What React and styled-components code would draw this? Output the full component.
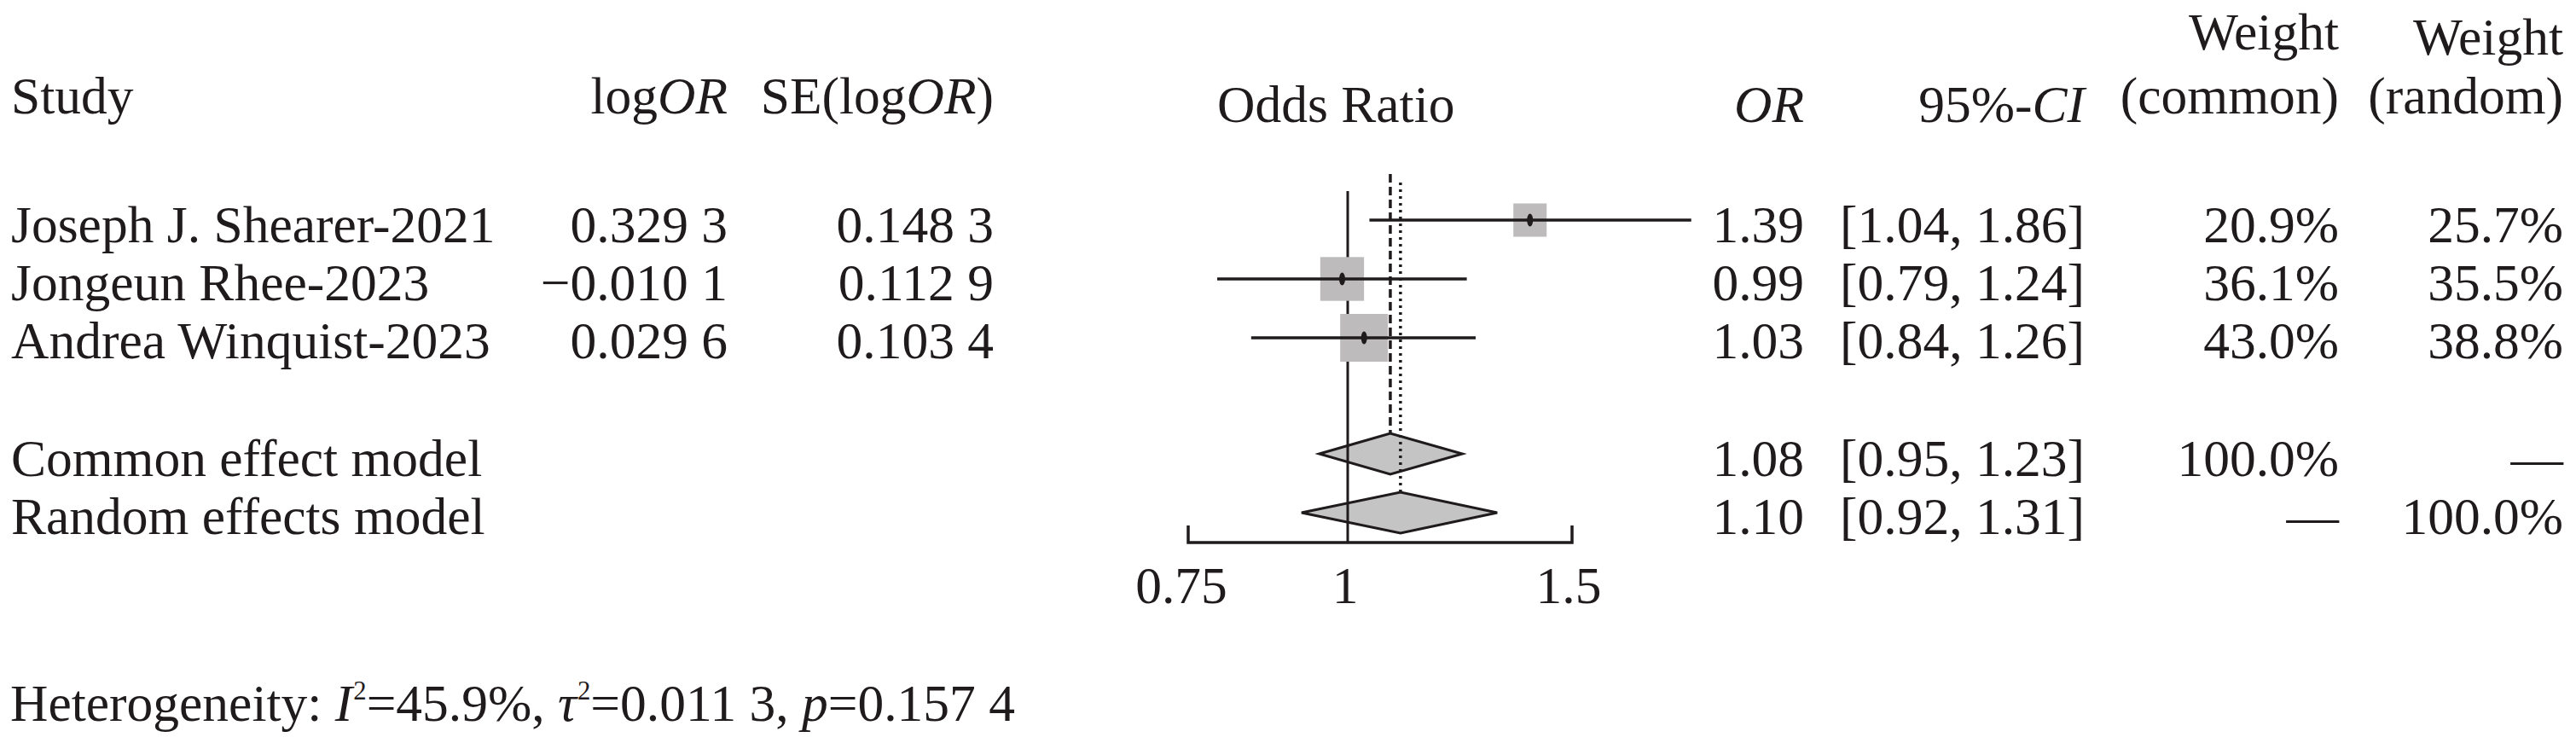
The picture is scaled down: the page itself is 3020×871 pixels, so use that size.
import React from 'react';
import styled, { createGlobalStyle } from 'styled-components';

const GlobalStyle = createGlobalStyle`
  html, body {
    margin: 0;
    padding: 0;
    background: #ffffff;
  }
  body {
    overflow: hidden;
  }
`;

const INK = '#1f1b1c';

const Figure = styled.div`
  display: grid;
  grid-template-columns: 600px 240px 312px 835px 115px 329px 298px 263px;
  grid-template-rows: 146px 83px 68px 68px 68px 70px 68px 68px 12px 68px 71px 68px;
  width: 3020px;
  height: 871px;
  box-sizing: border-box;
  padding-left: 13px;
  font-family: "Liberation Serif", "Times New Roman", serif;
  font-size: 61.5px;
  line-height: 68px;
  color: ${INK};
  white-space: nowrap;
`;

const HeadCell = styled.div`
  grid-column: ${(p) => p.$col};
  grid-row: 1;
  align-self: end;
  display: flex;
  flex-direction: column;
  align-items: ${(p) => (p.$left ? 'flex-start' : 'flex-end')};
  gap: ${(p) => p.$gap || 0}px;
  margin-bottom: ${(p) => -(p.$drop || 0)}px;
  padding-left: ${(p) => p.$indent || 0}px;
`;

const Cell = styled.div`
  grid-column: ${(p) => p.$col};
  grid-row: ${(p) => p.$row};
  text-align: ${(p) => (p.$left ? 'left' : 'right')};
`;

const Note = styled.div`
  grid-column: 1 / -1;
  grid-row: 12;
  margin-left: -1px;
`;

const Em = styled.i`
  font-style: italic;
`;

const Sup = styled.sup`
  font-size: 0.5em;
  line-height: 0;
  vertical-align: 0.8em;
  margin-left: 1px;
`;

const Plot = styled.svg`
  grid-column: 4;
  grid-row: 2 / 11;
  width: 835px;
  height: 573px;
  overflow: visible;
`;

const TickLabel = styled.text`
  font-family: "Liberation Serif", "Times New Roman", serif;
  font-size: 61.5px;
  fill: ${INK};
`;

const studies = [
  { name: 'Joseph J. Shearer-2021', te: '0.329 3', se: '0.148 3', or: 1.39, lo: 1.04, hi: 1.86, ci: '[1.04, 1.86]', wc: 20.9, wr: 25.7 },
  { name: 'Jongeun Rhee-2023', te: '\u22120.010 1', se: '0.112 9', or: 0.99, lo: 0.79, hi: 1.24, ci: '[0.79, 1.24]', wc: 36.1, wr: 35.5 },
  { name: 'Andrea Winquist-2023', te: '0.029 6', se: '0.103 4', or: 1.03, lo: 0.84, hi: 1.26, ci: '[0.84, 1.26]', wc: 43.0, wr: 38.8 },
];

const pooled = [
  { name: 'Common effect model', or: 1.08, lo: 0.95, hi: 1.23, ci: '[0.95, 1.23]', wc: '100.0%', wr: '\u2014' },
  { name: 'Random effects model', or: 1.1, lo: 0.92, hi: 1.31, ci: '[0.92, 1.31]', wc: '\u2014', wr: '100.0%' },
];

// page-coordinate helpers for the forest plot (log scale)
const px = (v) => 1580 + 649 * Math.log(v);
const studyY = [258, 327, 396];
const pooledY = [532, 601];
const HALF = 24;

const ForestPlot = () => (
  <Plot viewBox="1165 146 835 573">
    {pooled.map((m, i) => (
      <polygon
        key={m.name}
        points={`${px(m.lo)},${pooledY[i]} ${px(m.or)},${pooledY[i] - HALF} ${px(m.hi)},${pooledY[i]} ${px(m.or)},${pooledY[i] + HALF}`}
        fill="#c4c4c4"
        stroke={INK}
        strokeWidth="3"
      />
    ))}
    <line x1="1580" y1="224" x2="1580" y2="636" stroke={INK} strokeWidth="3" />
    <line x1={px(1.08)} y1="204" x2={px(1.08)} y2={pooledY[0] - HALF} stroke={INK} strokeWidth="3.5" strokeDasharray="10 5" />
    <line x1={px(1.1)} y1="214" x2={px(1.1)} y2={pooledY[1] - HALF} stroke={INK} strokeWidth="3.5" strokeDasharray="3 5" />
    {studies.map((s, i) => {
      const size = 56 * Math.sqrt(s.wc / 43);
      const y = studyY[i];
      return (
        <g key={s.name}>
          <rect x={px(s.or) - size / 2} y={y - size / 2} width={size} height={size} fill="#bdbbbb" />
          <line x1={px(s.lo)} y1={y} x2={px(s.hi)} y2={y} stroke={INK} strokeWidth="3.5" />
          <ellipse cx={px(s.or)} cy={y} rx="3.5" ry="7.5" fill={INK} />
        </g>
      );
    })}
    <path d="M1393 616 V636 H1843 V616" fill="none" stroke={INK} strokeWidth="3.5" />
    <TickLabel x="1385" y="707" textAnchor="middle">0.75</TickLabel>
    <TickLabel x="1577" y="707" textAnchor="middle">1</TickLabel>
    <TickLabel x="1839" y="707" textAnchor="middle">1.5</TickLabel>
  </Plot>
);

const App = () => (
  <>
    <GlobalStyle />
    <Figure>
      <HeadCell $col={1} $left>Study</HeadCell>
      <HeadCell $col={2}>
        <span>log<Em>OR</Em></span>
      </HeadCell>
      <HeadCell $col={3}>
        <span>SE(log<Em>OR</Em>)</span>
      </HeadCell>
      <HeadCell $col={4} $left $drop={10} $indent={262}>Odds Ratio</HeadCell>
      <HeadCell $col={5} $drop={10}>
        <Em>OR</Em>
      </HeadCell>
      <HeadCell $col={6} $drop={10}>
        <span>95%-<Em>CI</Em></span>
      </HeadCell>
      <HeadCell $col={7} $gap={7}>
        <span>Weight</span>
        <span>(common)</span>
      </HeadCell>
      <HeadCell $col={8} $gap={1}>
        <span>Weight</span>
        <span>(random)</span>
      </HeadCell>

      {studies.map((s, i) => (
        <React.Fragment key={s.name}>
          <Cell $col={1} $row={3 + i} $left>{s.name}</Cell>
          <Cell $col={2} $row={3 + i}>{s.te}</Cell>
          <Cell $col={3} $row={3 + i}>{s.se}</Cell>
          <Cell $col={5} $row={3 + i}>{s.or.toFixed(2)}</Cell>
          <Cell $col={6} $row={3 + i}>{s.ci}</Cell>
          <Cell $col={7} $row={3 + i}>{s.wc.toFixed(1)}%</Cell>
          <Cell $col={8} $row={3 + i}>{s.wr.toFixed(1)}%</Cell>
        </React.Fragment>
      ))}

      {pooled.map((m, i) => (
        <React.Fragment key={m.name}>
          <Cell $col={1} $row={7 + i} $left>{m.name}</Cell>
          <Cell $col={5} $row={7 + i}>{m.or.toFixed(2)}</Cell>
          <Cell $col={6} $row={7 + i}>{m.ci}</Cell>
          <Cell $col={7} $row={7 + i}>{m.wc}</Cell>
          <Cell $col={8} $row={7 + i}>{m.wr}</Cell>
        </React.Fragment>
      ))}

      <ForestPlot />

      <Note>
        Heterogeneity: <Em>I</Em><Sup>2</Sup>=45.9%, <Em>τ</Em><Sup>2</Sup>=0.011 3, <Em>p</Em>=0.157 4
      </Note>
    </Figure>
  </>
);

export default App;
